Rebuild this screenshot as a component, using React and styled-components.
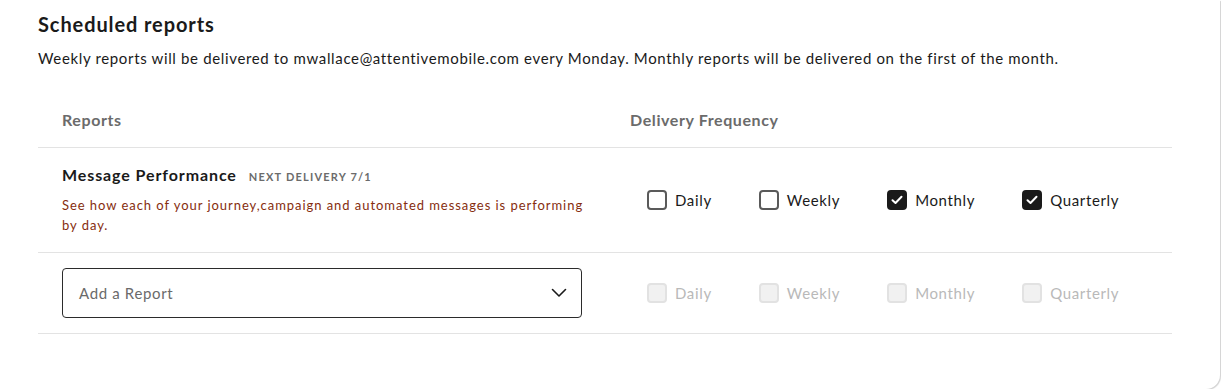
import React from "react";
import styled, { createGlobalStyle } from "styled-components";

const Global = createGlobalStyle`
  html, body { margin: 0; padding: 0; background: #ffffff; }
  body { font-family: Lato, "Open Sans", sans-serif; color: #1a1a1a; }
  * { box-sizing: border-box; }
`;

const Card = styled.div`
  width: 1220px;
  height: 389px;
  background: #fff;
  border-bottom-right-radius: 14px;
  box-shadow: 1px 1px 1px rgba(0, 0, 0, 0.18);
  padding: 12px 48px 0 38px;
`;

const Title = styled.h2`
  margin: 0;
  font-size: 20px;
  line-height: 24px;
  font-weight: 700;
  letter-spacing: 0.9px;
  color: #1a1a1a;
`;

const Intro = styled.p`
  margin: 11px 0 0;
  font-size: 15px;
  line-height: 22px;
  letter-spacing: 0.65px;
  color: #1a1a1a;
`;

const Table = styled.div`
  margin-top: 27px;
  width: 1134px;
`;

const Row = styled.div`
  display: grid;
  grid-template-columns: 592px 1fr;
  align-items: center;
  border-bottom: 1px solid #e3e3e3;
  padding: ${(p) => p.$pad};
`;

const HeadCell = styled.div`
  font-size: 16px;
  line-height: 24px;
  font-weight: 700;
  letter-spacing: 0.6px;
  color: #6b6b6b;
  padding-left: ${(p) => p.$indent};
`;

const ReportCell = styled.div`
  padding-left: 24px;
`;

const ReportName = styled.div`
  display: flex;
  align-items: baseline;
  gap: 12px;
  font-size: 16px;
  line-height: 22px;
  font-weight: 700;
  letter-spacing: 0.9px;
  color: #1a1a1a;
`;

const NextTag = styled.span`
  font-size: 11px;
  font-weight: 700;
  letter-spacing: 1.2px;
  color: #6b6b6b;
  text-transform: uppercase;
`;

const ReportDesc = styled.div`
  margin-top: 7px;
  max-width: 522px;
  font-size: 13px;
  line-height: 20px;
  letter-spacing: 0.95px;
  color: #862d0e;
`;

const Select = styled.button`
  width: 520px;
  height: 50px;
  display: flex;
  align-items: center;
  justify-content: space-between;
  padding: 0 14px 0 16px;
  border: 1px solid #2b2b2b;
  border-radius: 4px;
  background: #fff;
  font-family: inherit;
  font-size: 15px;
  letter-spacing: 0.65px;
  color: #6a6a6a;
  cursor: pointer;
`;

const Options = styled.div`
  display: flex;
  align-items: center;
  gap: 47px;
  padding-left: 17px;
`;

const Option = styled.label`
  display: flex;
  align-items: center;
  gap: 8px;
  font-size: 15px;
  line-height: 20px;
  letter-spacing: 0.65px;
  color: ${(p) => (p.$disabled ? "#b9b9b9" : "#1a1a1a")};
`;

const Box = styled.span`
  width: 20px;
  height: 20px;
  border-radius: 4px;
  display: inline-flex;
  align-items: center;
  justify-content: center;
  border: 2px solid
    ${(p) => (p.$disabled ? "#e2e2e2" : p.$checked ? "#1a1a1a" : "#5a5a5a")};
  background: ${(p) => (p.$disabled ? "#f1f1f1" : p.$checked ? "#1a1a1a" : "#fff")};
`;

const FREQS = ["Daily", "Weekly", "Monthly", "Quarterly"];

function Check({ label, checked, disabled }) {
  return (
    <Option $disabled={disabled}>
      <Box $checked={checked} $disabled={disabled}>
        {checked && (
          <svg width="12" height="10" viewBox="0 0 12 10" fill="none">
            <polyline
              points="1.5,5.2 4.5,8 10.5,1.8"
              stroke="#fff"
              strokeWidth="2"
              strokeLinecap="round"
              strokeLinejoin="round"
            />
          </svg>
        )}
      </Box>
      {label}
    </Option>
  );
}

function Frequencies({ checked = [], disabled }) {
  return (
    <Options>
      {FREQS.map((f) => (
        <Check key={f} label={f} checked={checked.includes(f)} disabled={disabled} />
      ))}
    </Options>
  );
}

export default function App() {
  return (
    <>
      <Global />
      <Card>
        <Title>Scheduled reports</Title>
        <Intro>
          Weekly reports will be delivered to mwallace@attentivemobile.com every Monday. Monthly
          reports will be delivered on the first of the month.
        </Intro>
        <Table>
          <Row $pad="12px 0 15px">
            <HeadCell $indent="24px">Reports</HeadCell>
            <HeadCell $indent="0">Delivery Frequency</HeadCell>
          </Row>
          <Row $pad="16px 0 17px">
            <ReportCell>
              <ReportName>
                Message Performance <NextTag>Next delivery 7/1</NextTag>
              </ReportName>
              <ReportDesc>
                See how each of your journey,campaign and automated messages is performing by day.
              </ReportDesc>
            </ReportCell>
            <Frequencies checked={["Monthly", "Quarterly"]} />
          </Row>
          <Row $pad="15px 0 15px">
            <ReportCell>
              <Select>
                Add a Report
                <svg width="16" height="10" viewBox="0 0 16 10" fill="none">
                  <polyline
                    points="1.5,1.5 8,8 14.5,1.5"
                    stroke="#1a1a1a"
                    strokeWidth="1.6"
                    strokeLinecap="round"
                    strokeLinejoin="round"
                  />
                </svg>
              </Select>
            </ReportCell>
            <Frequencies disabled />
          </Row>
        </Table>
      </Card>
    </>
  );
}
